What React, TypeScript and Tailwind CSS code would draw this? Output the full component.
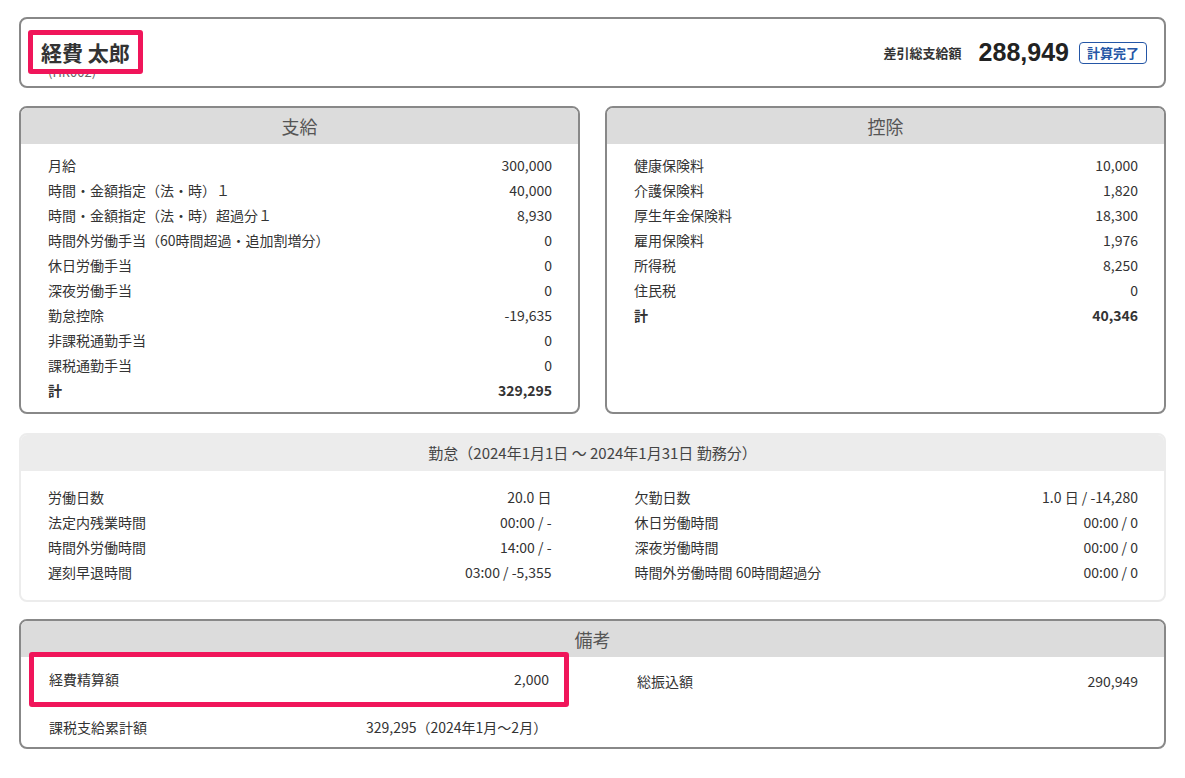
import * as React from "react";

type Row = { label: string; value: string; bold?: boolean };

const pay: Row[] = [
  { label: "月給", value: "300,000" },
  { label: "時間・金額指定（法・時）１", value: "40,000" },
  { label: "時間・金額指定（法・時）超過分１", value: "8,930" },
  { label: "時間外労働手当（60時間超過・追加割増分）", value: "0" },
  { label: "休日労働手当", value: "0" },
  { label: "深夜労働手当", value: "0" },
  { label: "勤怠控除", value: "-19,635" },
  { label: "非課税通勤手当", value: "0" },
  { label: "課税通勤手当", value: "0" },
  { label: "計", value: "329,295", bold: true },
];

const deduct: Row[] = [
  { label: "健康保険料", value: "10,000" },
  { label: "介護保険料", value: "1,820" },
  { label: "厚生年金保険料", value: "18,300" },
  { label: "雇用保険料", value: "1,976" },
  { label: "所得税", value: "8,250" },
  { label: "住民税", value: "0" },
  { label: "計", value: "40,346", bold: true },
];

const attLeft: Row[] = [
  { label: "労働日数", value: "20.0 日" },
  { label: "法定内残業時間", value: "00:00 / -" },
  { label: "時間外労働時間", value: "14:00 / -" },
  { label: "遅刻早退時間", value: "03:00 / -5,355" },
];

const attRight: Row[] = [
  { label: "欠勤日数", value: "1.0 日 / -14,280" },
  { label: "休日労働時間", value: "00:00 / 0" },
  { label: "深夜労働時間", value: "00:00 / 0" },
  { label: "時間外労働時間 60時間超過分", value: "00:00 / 0" },
];

function Line({ row }: { row: Row }) {
  return (
    <div className={"flex justify-between h-[25px] items-center " + (row.bold ? "font-bold" : "")}>
      <span>{row.label}</span>
      <span>{row.value}</span>
    </div>
  );
}

function Panel({ title, rows }: { title: string; rows: Row[] }) {
  return (
    <div className="w-[561px] border-2 border-[#888] rounded-[8px] overflow-hidden">
      <div className="bg-[#dcdcdc] h-[36px] flex items-center justify-center text-[18px] text-[#555]">{title}</div>
      <div className="pl-[27px] pr-[26px] pt-[9px] h-[268px]">
        {rows.map((r) => <Line key={r.label} row={r} />)}
      </div>
    </div>
  );
}

export default function App() {
  return (
    <div className="w-[1185px] h-[778px] bg-white text-[#333] text-[14px] px-[19px] pt-[17px] flex flex-col" style={{ fontFamily: '"Noto Sans CJK JP", "Liberation Sans", sans-serif' }}>
      {/* header */}
      <div className="h-[71px] border-2 border-[#888] rounded-[8px] flex items-center justify-between pl-[7px] pr-[17px]">
        <div className="flex flex-col">
          <span className="relative z-10 self-start bg-white border-[5px] border-[#f0155a] rounded-[3px] px-[8px] text-[21px] font-bold leading-[34px] text-[#333]">経費 太郎</span>
          <span className="ml-[20px] -mt-[9px] h-[10px] leading-[14px] text-[13px] text-[#666]">(HR002)</span>
        </div>
        <div className="flex items-center">
          <span className="text-[13px] font-bold">差引総支給額</span>
          <span className="ml-[17px] text-[25px] font-bold text-[#222]" style={{ fontFamily: '"Liberation Sans", sans-serif' }}>288,949</span>
          <span className="ml-[10px] border border-[#2456a6] rounded-[4px] text-[#2456a6] text-[13px] font-bold px-[7px] h-[22px] flex items-center">計算完了</span>
        </div>
      </div>

      <div className="flex justify-between mt-[18px]">
        <Panel title="支給" rows={pay} />
        <Panel title="控除" rows={deduct} />
      </div>

      {/* attendance */}
      <div className="mt-[19px] border-2 border-[#ececec] rounded-[8px] overflow-hidden">
        <div className="bg-[#ececec] h-[36px] flex items-center justify-center text-[15px] text-[#444]">勤怠（2024年1月1日 ～ 2024年1月31日 勤務分）</div>
        <div className="flex gap-[83px] pl-[27px] pr-[26px] pt-[14px] pb-[15px]">
          <div className="flex-1">{attLeft.map((r) => <Line key={r.label} row={r} />)}</div>
          <div className="flex-1">{attRight.map((r) => <Line key={r.label} row={r} />)}</div>
        </div>
      </div>

      {/* remarks */}
      <div className="mt-[17px] border-2 border-[#888] rounded-[8px]">
        <div className="bg-[#dcdcdc] rounded-t-[6px] h-[36px] flex items-center justify-center text-[18px] text-[#555]">備考</div>
        <div className="flex pl-[8px] pr-[26px]">
          <div className="w-[540px] flex flex-col">
            <div className="border-[5px] border-[#f0155a] rounded-[3px] -mt-[5px] h-[55px] flex items-center justify-between px-[15px]">
              <span>経費精算額</span>
              <span>2,000</span>
            </div>
            <div className="flex h-[40px] items-center pl-[20px] pr-[15px]">
              <span className="w-[317px]">課税支給累計額</span>
              <span>329,295（2024年1月～2月）</span>
            </div>
          </div>
          <div className="flex-1 ml-[68px] flex justify-between h-[49px] items-center">
            <span>総振込額</span>
            <span>290,949</span>
          </div>
        </div>
      </div>
    </div>
  );
}
